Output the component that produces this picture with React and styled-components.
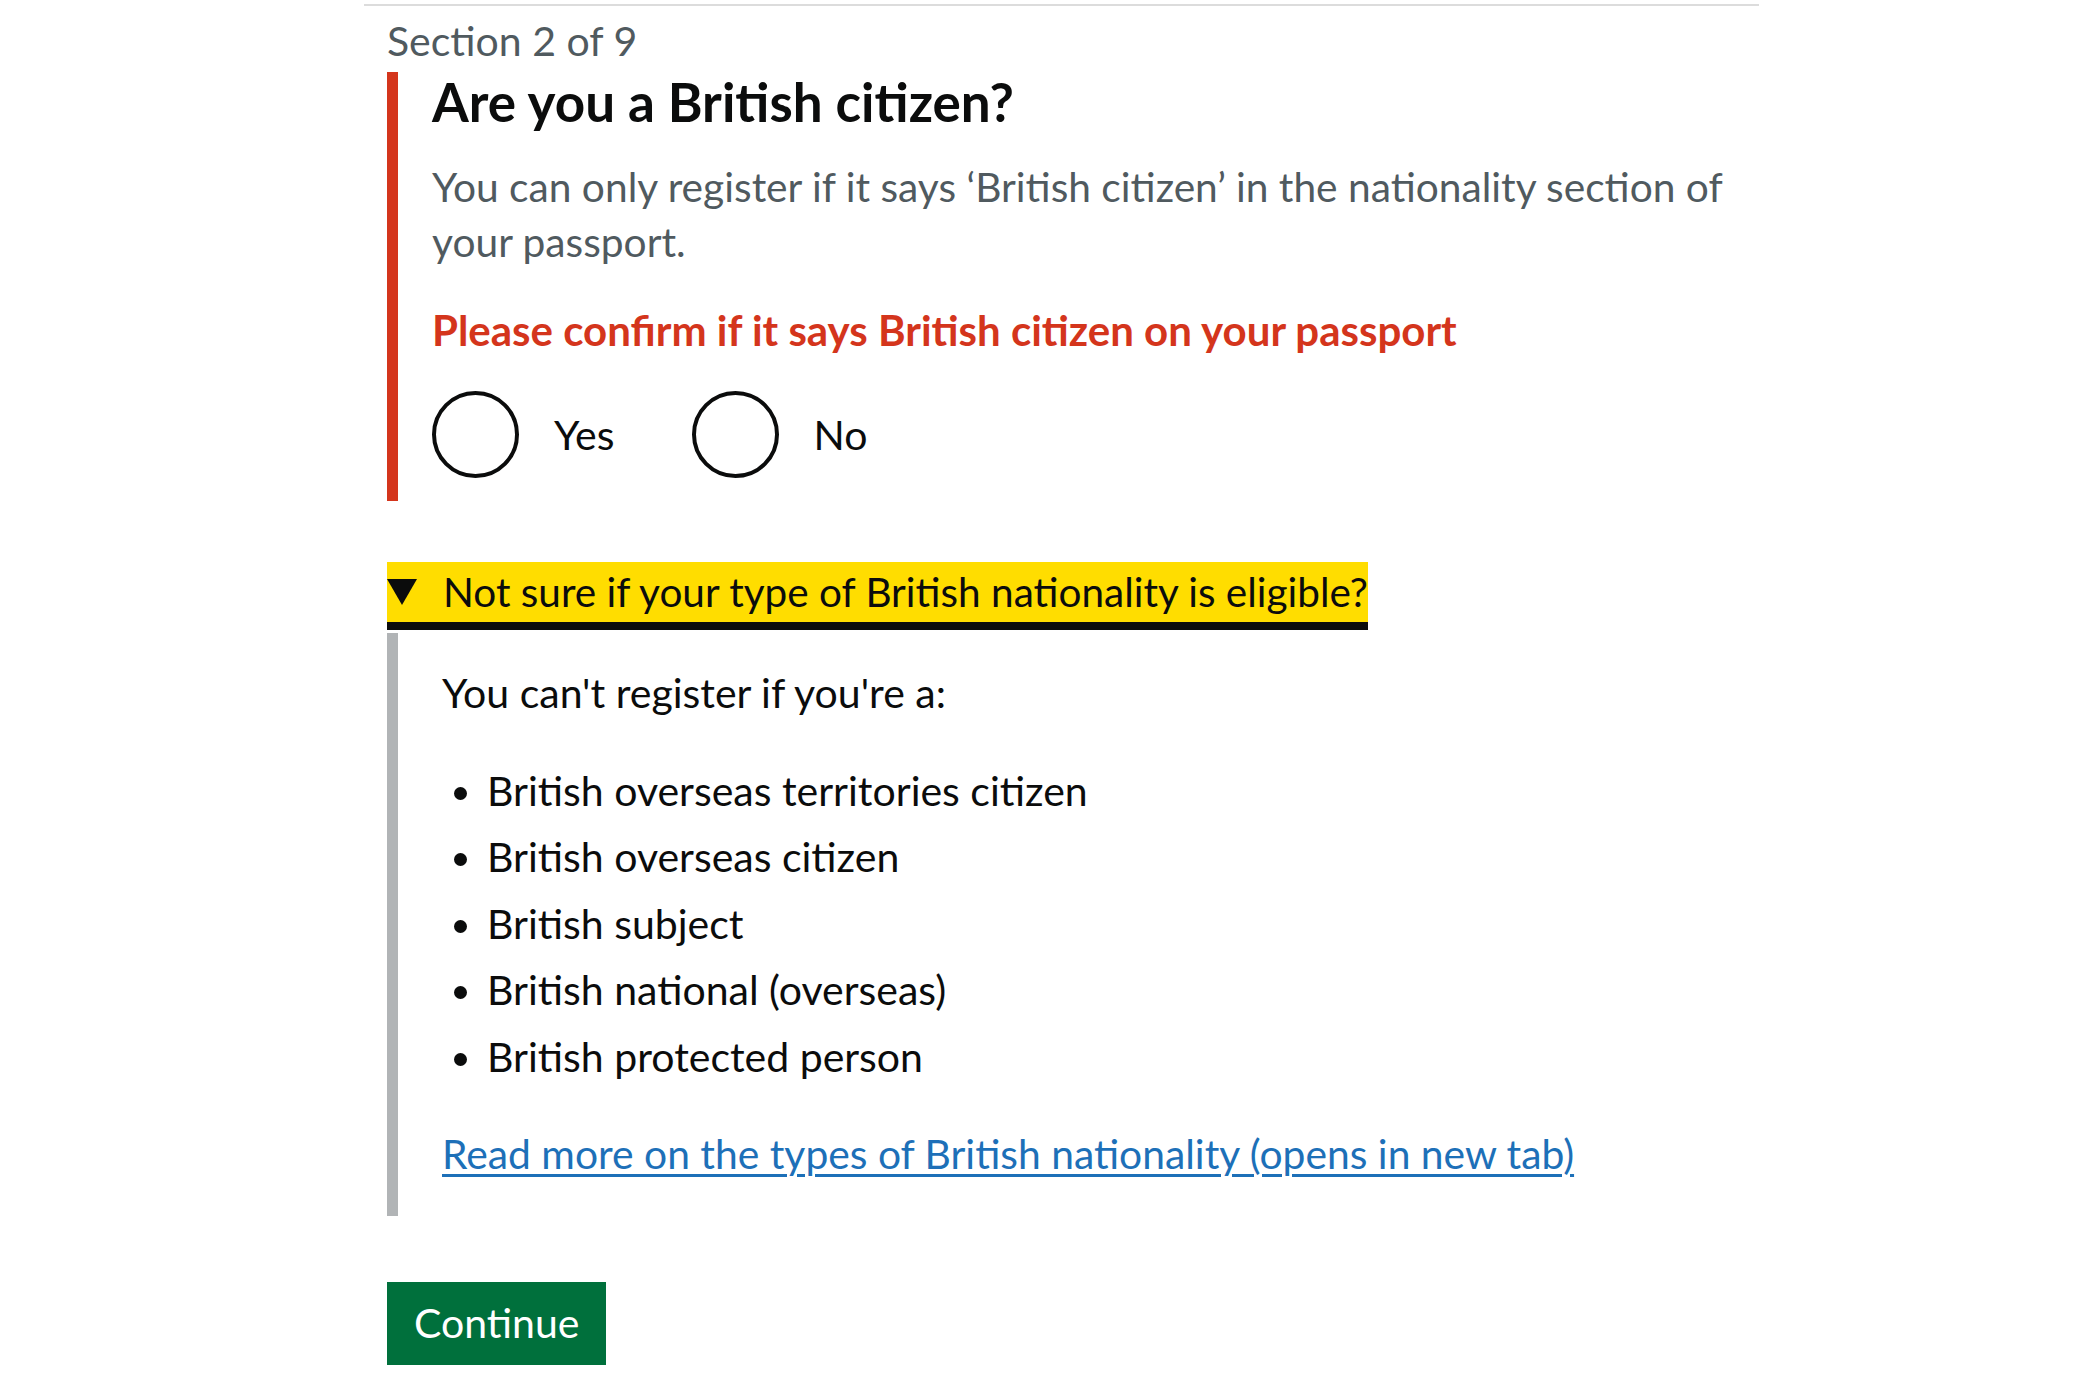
import React from 'react';
import styled, { createGlobalStyle } from 'styled-components';

const GlobalStyle = createGlobalStyle`
	body {
		margin: 0;
		background: #ffffff;
		color: #0b0c0c;
		font-family: Lato, "Liberation Sans", sans-serif;
	}
`;

const Page = styled.div`
	width: 1395px;
	margin-left: 364px;
	padding-top: 4px;
`;

const TopRule = styled.div`
	border-top: 2px solid #dcdcdc;
`;

const Main = styled.main`
	padding: 6.6px 0 0 23px;
`;

const Caption = styled.span`
	display: block;
	color: #505a5f;
	font-size: 41px;
	line-height: 55px;
	margin-bottom: 4.4px;
`;

const ErrorGroup = styled.fieldset`
	margin: 0;
	padding: 0 0 23px 34px;
	border: 0;
	border-left: 11px solid #d4351c;
`;

const Legend = styled.h1`
	margin: 0 0 29.6px;
	padding-top: 2px;
	font-size: 53px;
	line-height: 55px;
	font-weight: 700;
`;

const Hint = styled.p`
	margin: 0 0 34.3px;
	color: #505a5f;
	font-size: 40.7px;
	line-height: 55px;
`;

const ErrorMessage = styled.p`
	margin: 0 0 33.1px;
	color: #d4351c;
	font-size: 42px;
	line-height: 55px;
	font-weight: 700;
`;

const Radios = styled.div`
	display: flex;
	align-items: center;
`;

const RadioItem = styled.label`
	display: flex;
	align-items: center;
	margin-right: 77px;
	font-size: 41px;
	line-height: 55px;
	cursor: pointer;
`;

const RadioCircle = styled.span`
	box-sizing: border-box;
	width: 87px;
	height: 87px;
	border: 4px solid #0b0c0c;
	border-radius: 50%;
	margin-right: 35px;
`;

const Details = styled.details`
	margin-top: 61px;
`;

const Summary = styled.summary`
	display: inline-flex;
	align-items: center;
	list-style: none;
	background: #ffdd00;
	box-shadow: 0 8px 0 #0b0c0c;
	font-size: 40.5px;
	line-height: 60px;
	cursor: pointer;
	&::-webkit-details-marker {
		display: none;
	}
`;

const Arrow = styled.svg`
	width: 30px;
	height: 26px;
	margin-right: 26px;
`;

const DetailsText = styled.div`
	margin-top: 11px;
	padding: 31.6px 33px 35.4px 44px;
	border-left: 11px solid #b1b4b6;
	font-size: 41px;
	line-height: 55px;
`;

const Para = styled.p`
	margin: 0 0 43px;
`;

const List = styled.ul`
	margin: 0 0 42px;
	padding-left: 45px;
	list-style: disc;
`;

const ListItem = styled.li`
	margin-bottom: 11.5px;
	&:last-child {
		margin-bottom: 0;
	}
`;

const Link = styled.a`
	color: #1d70b8;
	font-size: 40.8px;
	text-decoration: underline;
	text-decoration-thickness: 3px;
	text-underline-offset: 5px;
`;

const Button = styled.button`
	margin-top: 66px;
	padding: 12.6px 27px 15.4px;
	border: 0;
	background: #00703c;
	box-shadow: 0 4px 0 #002d18;
	color: #ffffff;
	font-family: inherit;
	font-size: 41px;
	line-height: 55px;
	cursor: pointer;
`;

const excluded = [
	'British overseas territories citizen',
	'British overseas citizen',
	'British subject',
	'British national (overseas)',
	'British protected person',
];

export default function App() {
	return (
		<Page>
			<GlobalStyle />
			<TopRule />
			<Main>
				<Caption>Section 2 of 9</Caption>
				<ErrorGroup>
					<Legend>Are you a British citizen?</Legend>
					<Hint>
						You can only register if it says ‘British citizen’ in the nationality section of
						your passport.
					</Hint>
					<ErrorMessage>Please confirm if it says British citizen on your passport</ErrorMessage>
					<Radios>
						<RadioItem>
							<RadioCircle />
							Yes
						</RadioItem>
						<RadioItem>
							<RadioCircle />
							No
						</RadioItem>
					</Radios>
				</ErrorGroup>

				<Details open>
					<Summary>
						<Arrow viewBox="0 0 30 26">
							<polygon points="0,0 30,0 15,26" fill="#0b0c0c" />
						</Arrow>
						Not sure if your type of British nationality is eligible?
					</Summary>
					<DetailsText>
						<Para>You can't register if you're a:</Para>
						<List>
							{excluded.map(item => (
								<ListItem key={item}>{item}</ListItem>
							))}
						</List>
						<Link href="#">Read more on the types of British nationality (opens in new tab)</Link>
					</DetailsText>
				</Details>

				<Button>Continue</Button>
			</Main>
		</Page>
	);
}
